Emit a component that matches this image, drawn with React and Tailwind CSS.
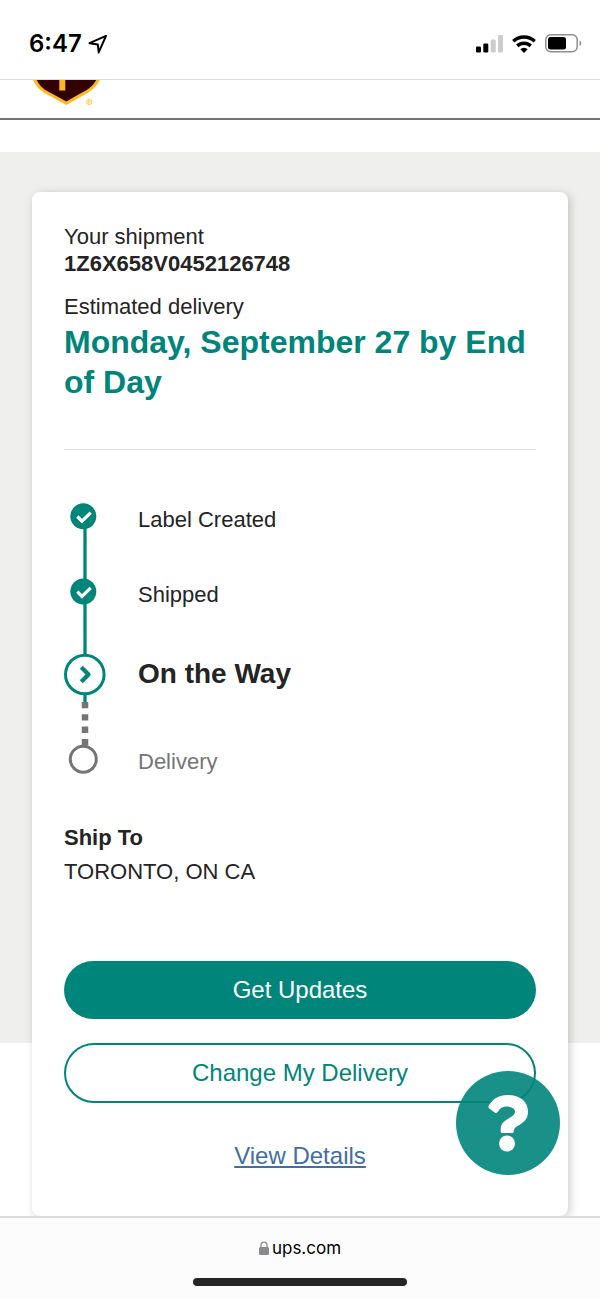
import React from "react";

const steps = [
  { label: "Label Created", className: "text-[22px] leading-7 text-[#242424]" },
  { label: "Shipped", className: "mt-[47px] text-[22px] leading-7 text-[#242424]" },
  { label: "On the Way", className: "mt-[47px] text-[28px] leading-9 font-bold text-[#242424]", current: true },
  { label: "Delivery", className: "mt-14 text-[22px] leading-7 text-[#757575]" },
];

const StatusBar = () => (
  <div className="flex h-20 items-center justify-between border-b border-[#dcdcdc] bg-white pt-2 pr-[18px] pl-[29px] text-black">
    <div className="flex items-center gap-[6px]">
      <span className="font-['Inter',sans-serif] text-2xl leading-8 font-semibold">6:47</span>
      <svg width="20" height="20" viewBox="0 0 20 20" fill="none" stroke="currentColor" strokeWidth="2" strokeLinejoin="round">
        <path d="M18 1.8 1.5 9.200l8.300 1.200.9 8z" />
      </svg>
    </div>
    <div className="flex items-center gap-[9px]">
      <svg width="28" height="18" viewBox="0 0 28 18">
        <rect x="1" y="11.500" width="5" height="6" rx="1.300" />
        <rect x="8.300" y="8.500" width="5" height="9" rx="1.300" />
        <rect x="15.700" y="4.500" width="5" height="13" rx="1.300" fill="#cccccc" />
        <rect x="23" y="0" width="5" height="17.500" rx="1.300" fill="#cccccc" />
      </svg>
      <svg width="24" height="18" viewBox="0 0 24 18" fill="none" stroke="currentColor" strokeWidth="3.600">
        <path d="M1.300 6.300a15.600 15.600 0 0 1 21.400 0" />
        <path d="M5.300 10.900a9.700 9.700 0 0 1 13.400 0" />
        <path d="M8.300 14.200a5.300 5.300 0 0 1 7.400 0L12 18z" fill="currentColor" stroke="none" />
      </svg>
      <svg width="37" height="19" viewBox="0 0 37 19">
        <rect x=".8" y=".8" width="31.400" height="17" rx="5" fill="none" stroke="#8e8e8e" strokeWidth="1.500" />
        <rect x="3" y="3" width="18" height="12.600" rx="2.500" />
        <path d="M34.500 6.500c2.300.8 2.300 4.700 0 5.500z" fill="#8e8e8e" />
      </svg>
    </div>
  </div>
);

const Header = () => (
  <header className="flex h-10 items-start border-b-2 border-[#737373] bg-white pl-8">
    <svg width="68" height="27" viewBox="0 0 68 27" role="img" aria-label="UPS">
      <path d="M1.200 0C4 6.500 8.500 11 15.500 14.500L34.300 25 52 14.900C60 11 65 6 67.700 0z" fill="#ffb81c" />
      <path d="M4.800 0C7.500 5.500 11 9 17 12L34.300 21.500 50.500 12.200C57.500 9 61.500 5 64.200 0z" fill="#330000" />
      <path d="M27.300 0h6v10.500h-6z" fill="#ffb81c" />
      <circle cx="57.200" cy="22" r="2.600" fill="none" stroke="#ffc951" strokeWidth="1" />
      <path d="M56.500 23.500v-3h1q.8.8 0 1.500h-.8l1.300 1.500" fill="none" stroke="#ffc951" strokeWidth=".8" />
    </svg>
  </header>
);

const ProgressTrack = () => (
  <svg width="42" height="274" viewBox="0 0 42 274" fill="none" aria-hidden="true" className="shrink-0">
    <path d="M21 14v139M21 191v10" stroke="#00857b" strokeWidth="3.300" />
    <circle cx="19.300" cy="14.300" r="13" fill="#00857b" />
    <path d="m13.300 14.500 4.700 4.700 8.700-8.500" stroke="#fff" strokeWidth="3.200" />
    <circle cx="19.300" cy="89.500" r="13" fill="#00857b" />
    <path d="m13.300 89.700 4.700 4.700 8.700-8.500" stroke="#fff" strokeWidth="3.200" />
    <circle cx="20.800" cy="172.500" r="19.300" fill="#fff" stroke="#00857b" strokeWidth="3" />
    <path d="m17.300 165.300 7.200 7.200-7.200 7.200" stroke="#00857b" strokeWidth="4.200" strokeLinejoin="round" />
    <path d="M21 200v43.500" stroke="#757575" strokeWidth="6.500" strokeDasharray="6.300 6" />
    <circle cx="19.300" cy="257.200" r="13" fill="#fff" stroke="#757575" strokeWidth="3" />
  </svg>
);

const ShipmentCard = () => (
  <div className="col-start-1 row-start-1 mx-8 mt-10 flex flex-col rounded-lg bg-white px-8 pt-[31px] pb-[44px] shadow-[2px_2px_10px_rgba(0,0,0,0.2)]">
    <p className="text-[22px] leading-[27px]">Your shipment</p>
    <p className="text-[22px] leading-[27px] font-bold">1Z6X658V0452126748</p>
    <p className="mt-4 text-[22px] leading-[27px]">Estimated delivery</p>
    <h1 className="mt-[2px] text-[32px] leading-10 font-bold text-[#00857b]">
      Monday, September 27 by End of Day
    </h1>
    <hr className="mt-[47px] border-[#dfdfdf]" />
    <div className="mt-[52px] flex gap-8">
      <ProgressTrack />
      <ol className="pt-1">
        {steps.map((step) => (
          <li key={step.label} className={step.className} aria-current={step.current ? "step" : undefined}>
            {step.label}
          </li>
        ))}
      </ol>
    </div>
    <h2 className="mt-12 text-[22px] leading-[27px] font-bold">Ship To</h2>
    <p className="mt-[7px] text-[22px] leading-[27px]">TORONTO, ON CA</p>
    <button className="mt-[76px] h-[58px] rounded-full bg-[#00857b] text-2xl text-white">Get Updates</button>
    <button className="mt-6 h-[60px] rounded-full border-2 border-[#00857b] text-2xl text-[#00857b]">
      Change My Delivery
    </button>
    <a href="#details" className="mt-[37px] self-center text-2xl text-[#426da9] underline">
      View Details
    </a>
  </div>
);

const HelpButton = () => (
  <button aria-label="Help" className="absolute right-10 bottom-[41px] h-[104px] w-[104px] rounded-full bg-[#00857b]/90">
    <svg width="104" height="104" viewBox="0 0 104 104" fill="#fff">
      <path d="M32.800 34.500C37 27.500 43 24 51.500 24 64 24 72 30.500 72 40.500 72 48 68 51.500 61.500 55 58.500 56.600 58 58 57.700 60.500 57.600 61.500 57 62 56 62H46.500C45.300 62 44.700 61.500 44.700 60.200 44.500 53.500 46.500 51 52.500 47.500 57 45 59 43.500 59 40.600 59 37.500 55.500 35.600 51 35.600 46.500 35.600 44 37.500 41.800 40.700 40.800 42.100 39.500 42.300 38.300 41.300L33.300 37.500C32.300 36.800 32.200 35.600 32.800 34.500z" />
      <circle cx="51" cy="72.500" r="8" />
    </svg>
  </button>
);

const BrowserBar = () => (
  <footer className="flex flex-1 flex-col items-center border-t-2 border-[#dcdcdc] bg-[#fcfcfc] pt-[14px]">
    <div className="flex items-center gap-[3px]">
      <svg width="10" height="14" viewBox="0 0 10 14" fill="#8a8a8e">
        <rect x="0" y="6" width="10" height="8" rx="1.500" />
        <path d="M2 7V4.200a3 3 0 0 1 6 0V7" fill="none" stroke="#8a8a8e" strokeWidth="1.300" />
      </svg>
      <span className="font-['Inter',sans-serif] text-[17px] leading-8 text-black">ups.com</span>
    </div>
    <div className="my-[14px] h-2 w-[214px] rounded-full bg-[#262626]" />
  </footer>
);

const App = () => {
  return (
    <div className="flex min-h-screen flex-col bg-white font-['Liberation_Sans',Arial,sans-serif] text-[#242424]">
      <StatusBar />
      <Header />
      <main className="relative mt-8 grid overflow-hidden">
        <div className="col-start-1 row-start-1 mb-[173px] bg-[#efefee]" />
        <ShipmentCard />
        <HelpButton />
      </main>
      <BrowserBar />
    </div>
  );
};

export default App;
